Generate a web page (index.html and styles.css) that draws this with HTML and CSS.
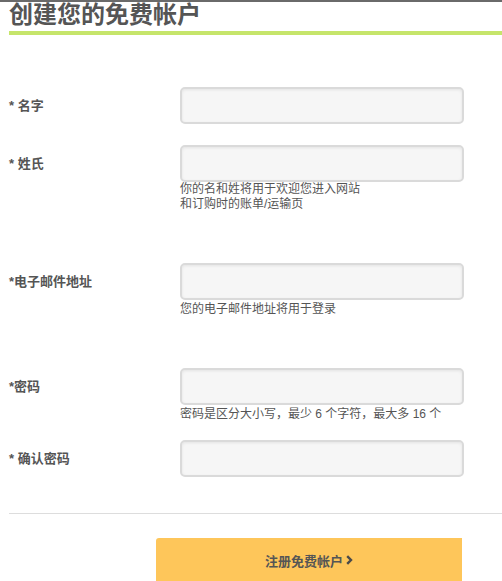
FILE: index.html
```html
<!DOCTYPE html>
<html lang="zh-CN">
<head>
<meta charset="utf-8">
<title>创建您的免费帐户</title>
<link rel="stylesheet" href="styles.css">
</head>
<body>
<div class="page">
  <h1 class="title">创建您的免费帐户</h1>
  <form class="form">
    <div class="row row-first">
      <label class="label">* 名字</label>
      <div class="field"><input class="input" type="text"></div>
    </div>
    <div class="row row-close">
      <label class="label">* 姓氏</label>
      <div class="field">
        <input class="input" type="text">
        <p class="help help-tight">你的名和姓将用于欢迎您进入网站<br>和订购时的账单/运输页</p>
      </div>
    </div>
    <div class="row row-far">
      <label class="label">*电子邮件地址</label>
      <div class="field">
        <input class="input" type="text">
        <p class="help">您的电子邮件地址将用于登录</p>
      </div>
    </div>
    <div class="row row-far">
      <label class="label">*密码</label>
      <div class="field">
        <input class="input" type="password">
        <p class="help">密码是区分大小写，最少 6 个字符，最大多 16 个</p>
      </div>
    </div>
    <div class="row row-confirm">
      <label class="label">* 确认密码</label>
      <div class="field"><input class="input" type="password"></div>
    </div>
    <hr class="sep">
    <div class="actions">
      <button class="btn" type="button">注册免费帐户 <svg class="chev" width="7" height="10" viewBox="0 0 7 10"><path d="M1.2 1.2 L5 5 L1.2 8.8" fill="none" stroke="#4a4a4a" stroke-width="2.4"/></svg></button>
    </div>
  </form>
</div>
</body>
</html>
```
FILE: styles.css
```css
html, body {
  margin: 0;
  padding: 0;
  background: #fff;
}
body {
  border-top: 2px solid #6a6a6a;
  font-family: "Liberation Sans", "Noto Sans CJK SC", sans-serif;
  color: #555;
}
.page {
  padding-left: 9px;
  overflow: hidden;
}
.title {
  margin: 0;
  font-size: 24px;
  line-height: 26px;
  font-weight: bold;
  color: #555;
  padding-bottom: 3px;
  border-bottom: 4px solid #c6e56b;
}
.form {
  margin: 0;
}
.row {
  display: flex;
  align-items: flex-start;
}
.row-first { margin-top: 52px; }
.row-close { margin-top: 21px; }
.row-far { margin-top: 51px; }
.row-confirm { margin-top: 18px; }
.label {
  width: 171px;
  flex: none;
  font-size: 13px;
  font-weight: bold;
  line-height: 37px;
  color: #555;
}
.field {
  display: flex;
  flex-direction: column;
}
.input {
  box-sizing: border-box;
  width: 284px;
  height: 37px;
  margin: 0;
  border: 2px solid #dadada;
  border-radius: 5px;
  background: #f6f6f6;
  box-shadow: inset 0 1px 3px rgba(0,0,0,0.08);
  outline: none;
}
.help {
  margin: 2px 0 0;
  font-size: 12px;
  line-height: 15px;
  color: #555;
}
.help-tight {
  margin-top: 0;
}
.sep {
  margin: 36px 0 0;
  border: 0;
  border-top: 1px solid #ddd;
  height: 0;
}
.actions {
  display: flex;
  padding-left: 147px;
  margin-top: 24px;
}
.btn {
  width: 306px;
  height: 46px;
  border: 0;
  border-radius: 3px 0 0 0;
  background: #fec65a;
  font-family: "Liberation Sans", "Noto Sans CJK SC", sans-serif;
  font-size: 13px;
  font-weight: bold;
  color: #555;
  padding: 0 0 2px;
  display: flex;
  align-items: center;
  justify-content: center;
  gap: 3px;
}
.chev {
  display: block;
}
```
